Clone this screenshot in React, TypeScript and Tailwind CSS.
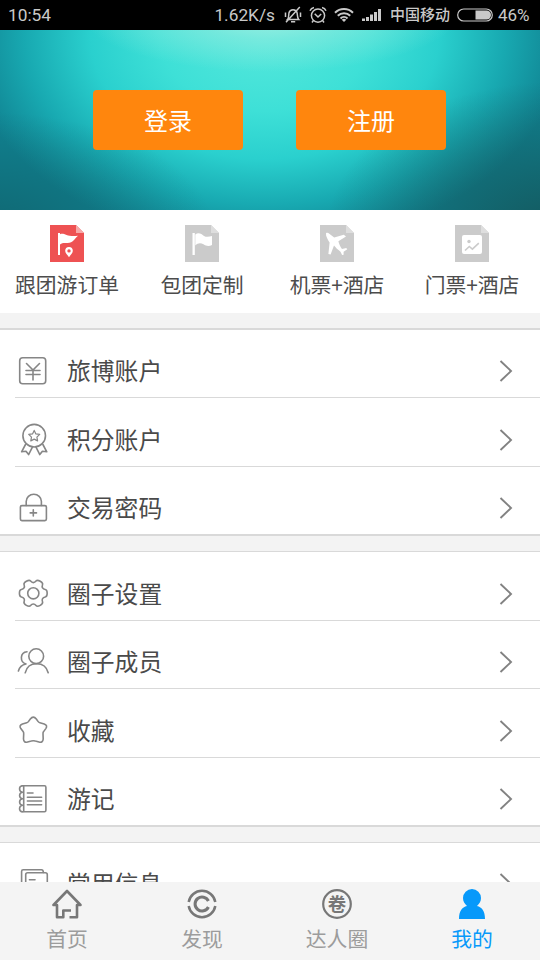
import React from 'react';
import { clsx } from 'clsx';

type Point = [number, number];

// Closed outline whose corners are rounded off through the edge midpoints
const smoothPath = (points: Point[]) => {
  const mid = (a: Point, b: Point) => `${((a[0] + b[0]) / 2).toFixed(2)} ${((a[1] + b[1]) / 2).toFixed(2)}`;
  const last = points[points.length - 1];
  const curves = points.map((p, i) => {
    const next = points[(i + 1) % points.length];
    return `Q${p[0].toFixed(2)} ${p[1].toFixed(2)} ${mid(p, next)}`;
  });
  return `M${mid(last, points[0])}${curves.join('')}Z`;
};

const polar = (cx: number, cy: number, r: number, deg: number): Point => [
  cx + r * Math.cos((deg * Math.PI) / 180),
  cy + r * Math.sin((deg * Math.PI) / 180),
];

const gearPath = smoothPath(
  [0, 60, 120, 180, 240, 300].flatMap(a => [
    polar(16.3, 17.3, 10.8, a - 22),
    polar(16.3, 17.3, 14.3, a - 14),
    polar(16.3, 17.3, 14.3, a + 14),
    polar(16.3, 17.3, 10.8, a + 22),
  ])
);

const ListIcon: React.FC<{ children: React.ReactNode }> = ({ children }) => (
  <svg
    className="w-[34px] h-9 shrink-0"
    viewBox="0 0 34 36"
    fill="none"
    stroke="#868686"
    strokeWidth="1.6"
    strokeLinecap="round"
    strokeLinejoin="round"
  >
    {children}
  </svg>
);

const YenIcon = () => (
  <ListIcon>
    <rect x="2.7" y="4.7" width="26" height="26" rx="3" />
    <path d="M9.5 10.5L16 17L22.5 10.5M16 17V27M9 17.5H23M9 21.5H23" />
  </ListIcon>
);

const MedalIcon = () => (
  <ListIcon>
    <circle cx="17.2" cy="13.7" r="11.3" />
    <path
      strokeWidth="1.2"
      d="M17.2 8.4L18.9 11.9L22.7 12.4L19.9 15.1L20.6 18.9L17.2 17.1L13.8 18.9L14.5 15.1L11.7 12.4L15.5 11.9Z"
    />
    <path d="M8.5 22.5L4.6 29.8L9 29.3L11.6 32.6L15.4 25.2M25.9 22.5L29.8 29.8L25.4 29.3L22.8 32.6L19 25.2" />
  </ListIcon>
);

const LockIcon = () => (
  <ListIcon>
    <rect x="3.4" y="15.6" width="26" height="15" rx="1.5" />
    <path d="M9.2 15.5V11.5A7.6 7.3 0 0 1 24.4 11.5V15.5M16.3 19.7V26M13.2 22.9H19.5" />
  </ListIcon>
);

const GearIcon = () => (
  <ListIcon>
    <path d={gearPath} />
    <circle cx="16.3" cy="17.3" r="5.6" />
  </ListIcon>
);

const MembersIcon = () => (
  <ListIcon>
    <circle cx="19.2" cy="12.2" r="7.4" />
    <path d="M8.2 28.8C9.5 23 13.7 19.7 19.6 19.7S29.8 23 31.2 28.8" />
    <path d="M10 7.8C2.8 8.5 2.6 18 9 20C5 20.8 2.3 23.5 1.4 27" />
  </ListIcon>
);

const StarIcon = () => (
  <ListIcon>
    <path d="M13.3 6Q16.3 2.2 19.3 6L21 8.4Q21.7 9.4 22.9 9.7L27.2 10.9Q31 12.3 28.8 15.6L26.6 18.6Q25.9 19.5 26 20.7L26.2 26Q25.9 30 22 29L18.3 28Q16.3 27.4 14.3 28L10.6 29Q6.7 30 6.5 26L6.7 20.7Q6.8 19.5 6.1 18.6L3.8 15.6Q1.7 12.3 5.4 10.9L9.7 9.7Q10.9 9.4 11.6 8.4Z" />
  </ListIcon>
);

const NotebookIcon = () => (
  <ListIcon>
    <path d="M5 4.8H27.5Q28.9 4.8 28.9 6.2V29.2Q28.9 30.7 27.5 30.7H5" />
    <path d="M6.7 5V30.5" />
    <path d="M5.2 4.8C1.6 5.2 1.6 10.7 5.6 11.2M5.6 11.2C1.6 11.6 1.6 17.2 5.6 17.7M5.6 17.7C1.6 18.2 1.6 23.8 5.6 24.2M5.6 24.2C1.6 24.7 1.6 30.2 5.2 30.7" />
    <path d="M10.4 12H16M10.4 16.3H24.6M10.4 20H24.6M10.4 23.7H24.6" />
  </ListIcon>
);

const InfoIcon = () => (
  <ListIcon>
    <path d="M4.6 28V5.4Q4.6 3.8 6.2 3.8H24.5Q26.2 3.8 26.4 6.4" />
    <rect x="8.7" y="6.7" width="21.6" height="24" rx="2" />
    <path d="M12.4 13.7H18" />
  </ListIcon>
);

const StatusBar = () => (
  <header className="h-[30px] shrink-0 bg-black text-[#c9c9c9] flex items-center pl-2 pr-[10px] text-[17.3px] leading-[30px] font-['Roboto','Noto_Sans_CJK_SC',sans-serif]">
    <span>10:54</span>
    <span className="ml-auto">1.62K/s</span>
    <svg className="w-[18px] h-[18px] ml-[9px]" viewBox="0 0 18 18" fill="none" stroke="currentColor" strokeWidth="1.5">
      <path d="M3.5 13.5C5 12 4.5 9 5 6.8C5.6 4.6 7 3.7 9 3.7S12.6 4.6 13.1 6.8C13.5 9 13.2 12 14.7 13.5ZM7 15.8H11.2M15.8 1L2 16.3M1.5 6.5V11M16.5 6.5V11" />
    </svg>
    <svg className="w-[18px] h-[18px] ml-[7px]" viewBox="0 0 18 18" fill="none" stroke="currentColor" strokeWidth="1.5">
      <circle cx="9" cy="9.6" r="6.6" />
      <path d="M5.7 7.7L9 11L12.2 8M1 4.8Q2 2.2 5 1.6M17 4.8Q16 2.2 13 1.6M4.3 14.6L3 16.5M13.7 14.6L15 16.5" />
    </svg>
    <svg className="w-5 h-[14px] ml-[7px]" viewBox="0 0 20 14" fill="none" stroke="currentColor" strokeWidth="2">
      <path d="M1 4.8C6 -.2 14 -.2 19 4.8M3.8 7.8C7.2 4.3 12.8 4.3 16.2 7.8M6.5 10.5C8.5 8.5 11.5 8.5 13.5 10.5" />
      <path d="M10 14L7.7 11.7Q10 10 12.3 11.7Z" fill="currentColor" stroke="none" />
    </svg>
    <svg className="w-5 h-[14px] ml-2" viewBox="0 0 20 14" fill="currentColor">
      <path d="M0 10.5h3V13H0zM4 9h3v4H4zM8 6.5h3V13H8zM12 4h3v9h-3zM16 1h3v12h-3z" />
    </svg>
    <span className="ml-2 text-[15px] font-medium w-[60px] whitespace-nowrap">中国移动</span>
    <svg className="w-9 h-[14px] ml-[7px]" viewBox="0 0 36 14" fill="none" stroke="currentColor">
      <rect x=".7" y="1" width="34.6" height="12" rx="6" strokeWidth="1.2" />
      <path d="M18.5 2.5H29.5A4.5 4.5 0 0 1 29.5 11.5H18.5Z" fill="currentColor" stroke="none" />
    </svg>
    <span className="ml-[5px] w-8 whitespace-nowrap text-[17px]">46%</span>
  </header>
);

const Banner = () => (
  <section className="h-[180px] shrink-0 flex justify-center gap-[53px] pt-[60px] pr-px bg-[radial-gradient(ellipse_190px_60px_at_50%_-10%,#a4efe2_0%,#8debdf99_45%,#8debdf00_100%),radial-gradient(ellipse_230px_150px_at_103%_112%,#14555aee_0%,#14555a00_100%),radial-gradient(ellipse_230px_120px_at_-3%_112%,#10606acc_0%,#10606a00_100%),radial-gradient(ellipse_300px_210px_at_49%_4%,#55e8dc_0%,#3ee0d7_35%,#2ad0ce_58%,#18a9b1_80%,#108291_100%)]">
    {['登录', '注册'].map(label => (
      <button key={label} className="w-[150px] h-[60px] rounded bg-[#ff860d] text-white text-2xl leading-[60px]">
        {label}
      </button>
    ))}
  </section>
);

interface OrderTab {
  label: string;
  active?: boolean;
  glyph: React.ReactNode;
}

const orderTabs: OrderTab[] = [
  {
    label: '跟团游订单',
    active: true,
    glyph: (
      <>
        <path d="M8 8H10V30H8Z" />
        <path d="M10 9.2C14 7 17 12.5 28 10.7C24 14 23.5 17.5 17.5 18C14 18.3 12.5 17.5 10 19.5Z" />
        <path
          fillRule="evenodd"
          d="M19 22a3.8 3.8 0 0 1 3.8 3.8C22.8 28.4 20.4 29.8 19 32.3C17.6 29.8 15.2 28.4 15.2 25.8A3.8 3.8 0 0 1 19 22ZM19 24.2a1.7 1.7 0 1 0 0 3.4a1.7 1.7 0 0 0 0-3.4Z"
        />
      </>
    ),
  },
  {
    label: '包团定制',
    glyph: (
      <>
        <path d="M7.5 8H9.8V30H7.5Z" />
        <path d="M10.3 9.5C13.5 7 16.5 9 19 11C21.5 12.5 24.5 11.7 27 11V20C24 21.5 21 21 18.5 19.3C15.5 17.3 12.5 18 10.3 20.5Z" />
      </>
    ),
  },
  {
    label: '机票+酒店',
    glyph: (
      <path d="M6 8.2C7 7.2 8.2 7.8 9.3 8.7L14.2 12.6L23.8 9.8L26 11.4L18.4 16.2C19 19 20.3 21.6 22 24.1L26.2 22.9L27.3 24.2L23.6 26.8L23.6 29.7L22.1 30.1L20.5 26.7C17.7 24.7 15.8 22.8 14 20.6L10.6 29.5L8.4 28.9L9.6 17.6C7.9 15.3 6.9 12.9 6.1 10.5Z" />
    ),
  },
  {
    label: '门票+酒店',
    glyph: (
      <>
        <rect x="7" y="10" width="20" height="19" rx="2" />
        <circle cx="14" cy="16.5" r="1.7" fill="#cbcbcb" />
        <path d="M10 25.5L14.3 21.5L17.4 24.2L23.8 18.2" fill="none" stroke="#cbcbcb" strokeWidth="1.6" />
      </>
    ),
  },
];

const OrderTabs = () => (
  <section className="h-[103px] shrink-0 grid grid-cols-4 bg-white">
    {orderTabs.map(tab => (
      <div key={tab.label} className="flex flex-col items-center pt-[15px] pr-px">
        <svg className="w-[34px] h-[37px]" viewBox="0 0 34 37" fill="#fff">
          <path d="M0 0H26L34 8V37H0Z" fill={tab.active ? '#ee5253' : '#cbcbcb'} />
          <path d="M26 0L34 8H26Z" fill={tab.active ? '#f7a9a9' : '#dedede'} />
          {tab.glyph}
        </svg>
        <span className="mt-1.5 text-[20.8px] leading-8 text-[#4c4c4c] whitespace-nowrap">{tab.label}</span>
      </div>
    ))}
  </section>
);

interface MenuRowProps {
  label: string;
  icon: React.ReactNode;
  className: string;
  last?: boolean;
}

const MenuRow: React.FC<MenuRowProps> = ({ label, icon, className, last = false }) => (
  <div className={clsx('ml-[15px] pl-0.5 pr-[27px] flex items-start', className, !last && 'border-b border-[#d9d9d9]')}>
    {icon}
    <span className="-mt-px ml-4 text-[23.8px] leading-9 text-[#4a4a4a]">{label}</span>
    <svg className="ml-auto w-[14px] h-9" viewBox="0 0 14 36" fill="none" stroke="#828282" strokeWidth="1.9">
      <path d="M1.5 8L12 18L1.5 28" />
    </svg>
  </div>
);

const Divider = () => <div className="h-[15px] bg-[#f3f3f3]" />;

const Menu = () => (
  <main className="flex-1 min-h-0 overflow-hidden bg-white">
    <Divider />
    <div className="border-y-2 border-[#d9d9d9]">
      <MenuRow label="旅博账户" icon={<YenIcon />} className="h-[68px] pt-[23px]" />
      <MenuRow label="积分账户" icon={<MedalIcon />} className="h-[69px] pt-6" />
      <MenuRow label="交易密码" icon={<LockIcon />} className="h-[67px] pt-[23px]" last />
    </div>
    <Divider />
    <div className="border-t border-b-2 border-[#d9d9d9]">
      <MenuRow label="圈子设置" icon={<GearIcon />} className="h-[69px] pt-6" />
      <MenuRow label="圈子成员" icon={<MembersIcon />} className="h-[68px] pt-[23px]" />
      <MenuRow label="收藏" icon={<StarIcon />} className="h-[69px] pt-6" />
      <MenuRow label="游记" icon={<NotebookIcon />} className="h-[67px] pt-[23px]" last />
    </div>
    <Divider />
    <div className="border-t border-[#d9d9d9]">
      <MenuRow label="常用信息" icon={<InfoIcon />} className="h-[69px] pt-[23px]" />
    </div>
  </main>
);

const navItems = [
  {
    label: '首页',
    icon: (
      <path
        d="M17.5 28.3H25V16H28.5L15 2L1.5 16H5V28.3H11.3V21.5H19"
        fill="none"
        stroke="#777"
        strokeWidth="2.6"
        strokeLinejoin="round"
      />
    ),
  },
  {
    label: '发现',
    icon: (
      <g fill="none" stroke="#777" strokeWidth="2.5">
        <path d="M1.7 13A13.5 13.5 0 0 1 28.3 13M1.7 17A13.5 13.5 0 0 0 28.3 17" />
        <path d="M21.4 12A7 7 0 1 0 21.4 18" strokeWidth="3" />
      </g>
    ),
  },
  {
    label: '达人圈',
    icon: (
      <>
        <circle cx="15" cy="15" r="13.8" fill="none" stroke="#777" strokeWidth="2.2" />
        <text x="15" y="21.8" textAnchor="middle" fontSize="18.5" fontWeight="700" fill="#777">
          卷
        </text>
      </>
    ),
  },
  {
    label: '我的',
    active: true,
    icon: (
      <path
        d="M15 0A9 9 0 0 1 24 9C24 12.5 22.3 14.8 20 17C25 18.3 28 22 28 30H2C2 22 5 18.3 10 17C7.7 14.8 6 12.5 6 9A9 9 0 0 1 15 0Z"
        fill="#0799fa"
      />
    ),
  },
];

const BottomNav = () => (
  <nav className="h-[78px] shrink-0 grid grid-cols-4 bg-[#f4f4f4]">
    {navItems.map(item => (
      <div key={item.label} className="flex flex-col items-center pt-[7px] pr-px">
        <svg className="w-[30px] h-[30px]" viewBox="0 0 30 30">
          {item.icon}
        </svg>
        <span className={clsx('mt-[3px] text-[20.8px] leading-8', item.active ? 'text-[#0799fa]' : 'text-[#9c9c9c]')}>
          {item.label}
        </span>
      </div>
    ))}
  </nav>
);

export default function App() {
  return (
    <div className="w-[540px] h-[960px] flex flex-col overflow-hidden bg-white font-['Noto_Sans_CJK_SC',sans-serif]">
      <StatusBar />
      <Banner />
      <OrderTabs />
      <Menu />
      <BottomNav />
    </div>
  );
}
